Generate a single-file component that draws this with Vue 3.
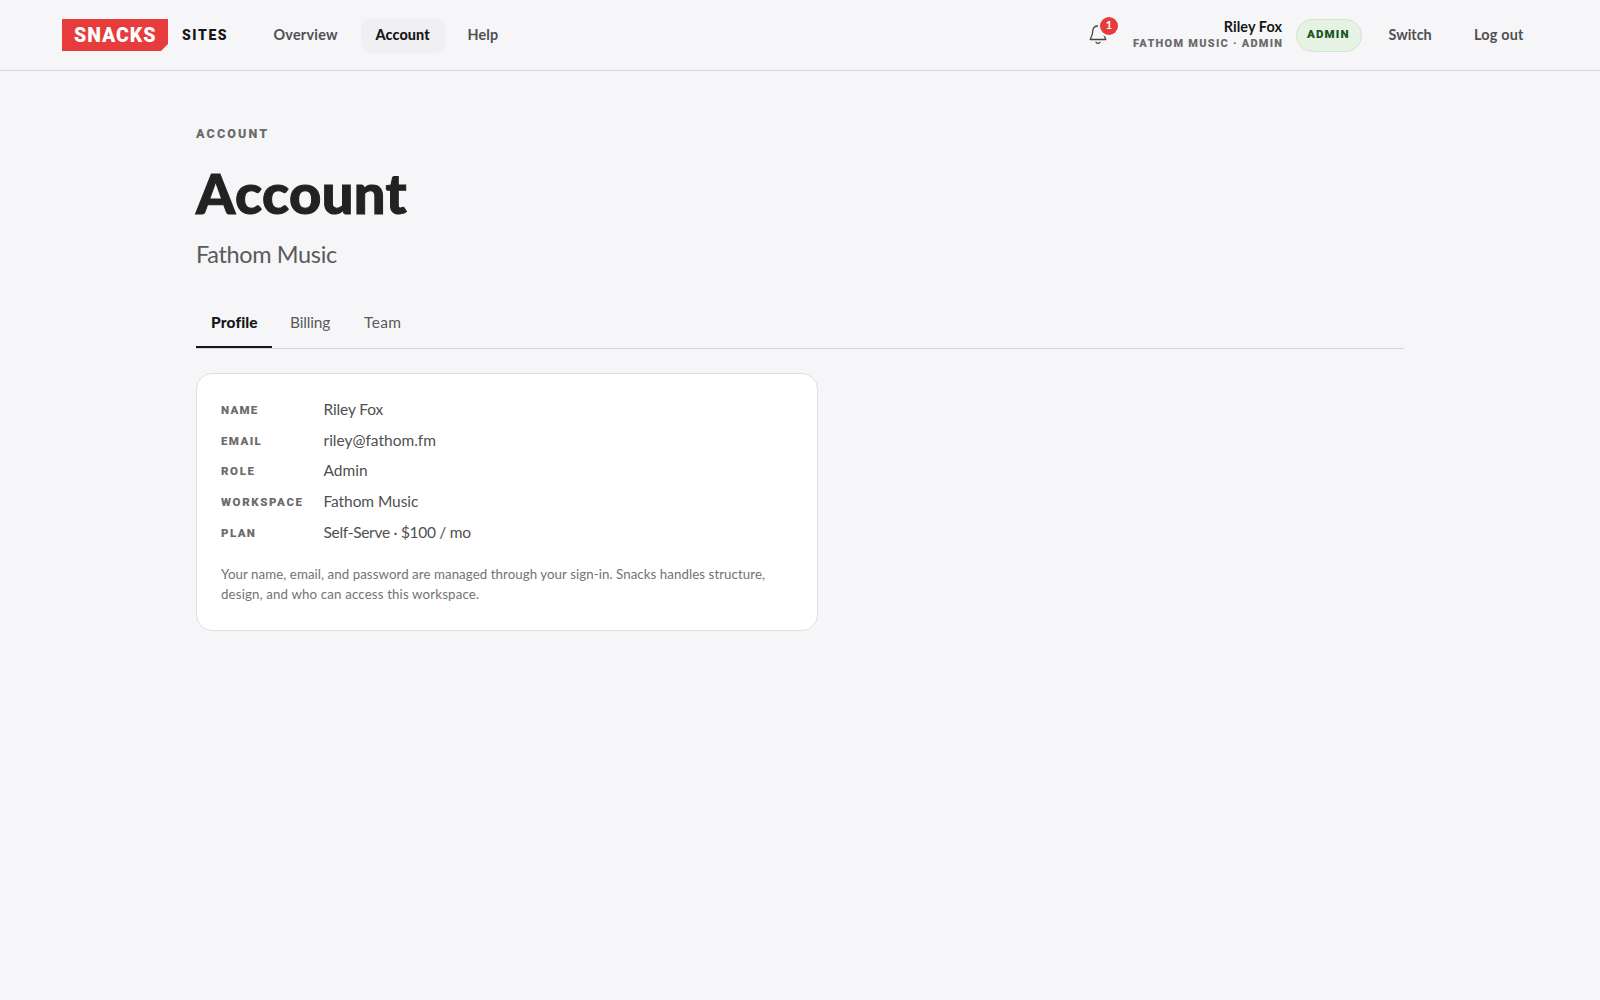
<script setup>
const rows = [
  { key: 'name', label: 'NAME', value: 'Riley Fox' },
  { key: 'email', label: 'EMAIL', value: 'riley@fathom.fm' },
  { key: 'role', label: 'ROLE', value: 'Admin' },
  { key: 'workspace', label: 'WORKSPACE', value: 'Fathom Music' },
  { key: 'plan', label: 'PLAN', value: 'Self-Serve · $100 / mo' },
]
</script>

<template>
  <div class="page">
    <header class="topbar">
      <a class="logo">SNACKS</a>
      <span class="product">SITES</span>
      <nav class="nav">
        <a class="nav-item overview">Overview</a>
        <a class="nav-item active">Account</a>
        <a class="nav-item help">Help</a>
      </nav>
      <div class="right">
        <button class="bell" aria-label="Notifications">
          <svg width="18" height="20" viewBox="0 0 18 20" fill="none" stroke="#444" stroke-width="1.3" stroke-linecap="round" stroke-linejoin="round">
            <path d="M9 1C6 1 3.900 3 3.800 6C3.600 10 3 11.300 1.200 14.500H16.800C15 11.300 14.400 10 14.200 6C14.100 3 12 1 9 1Z" />
            <path d="M7 17.300C7.600 18.600 10.400 18.600 11 17.300" />
          </svg>
          <span class="badge">1</span>
        </button>
        <div class="user">
          <span class="user-name">Riley Fox</span>
          <span class="user-org">FATHOM MUSIC · ADMIN</span>
        </div>
        <span class="pill">ADMIN</span>
        <a class="action switch">Switch</a>
        <a class="action logout">Log out</a>
      </div>
    </header>

    <main class="content">
      <div class="eyebrow">ACCOUNT</div>
      <h1>Account</h1>
      <p class="subtitle">Fathom Music</p>
      <div class="tabs">
        <a class="tab selected">Profile</a>
        <a class="tab billing">Billing</a>
        <a class="tab team">Team</a>
      </div>
      <section class="card">
        <dl>
          <div v-for="row in rows" :key="row.key" class="row" :class="row.key">
            <dt>{{ row.label }}</dt>
            <dd>{{ row.value }}</dd>
          </div>
        </dl>
        <p class="note">
          <span class="first">Your name, email, and password are managed through your sign-in. Snacks handles structure,</span><br>
          <span class="second">design, and who can access this workspace.</span>
        </p>
      </section>
    </main>
  </div>
</template>

<style>
body { background: #f6f6f9; }
</style>

<style scoped>
* { box-sizing: border-box; }
.page {
  min-height: 1000px;
  background: #f6f6f9;
  color: #505050;
  font-family: Lato, "Liberation Sans", sans-serif;
}
.topbar {
  display: flex;
  align-items: center;
  height: 71px;
  padding: 0 62px;
  border-bottom: 1px solid #d8d8dc;
}
.logo, .product, .user-org, .pill, .eyebrow, dt {
  font-family: Roboto, "Liberation Sans", sans-serif;
  font-weight: 900;
  white-space: nowrap;
}
.logo {
  width: 106px;
  height: 32px;
  padding-left: 12px;
  background: #e63c3c;
  color: #fff;
  font-size: 19.5px;
  line-height: 33px;
  letter-spacing: 0.95px;
  clip-path: polygon(0 0, 100% 0, 100% 25px, calc(100% - 7px) 100%, 0 100%);
}
.product {
  width: 60px;
  margin-left: 14px;
  padding-bottom: 1px;
  color: #171717;
  font-size: 14px;
  line-height: 20px;
  letter-spacing: 1.6px;
}
.nav { display: flex; gap: 8px; margin-left: 16.5px; }
.nav-item {
  height: 35px;
  padding: 0 15px;
  border-radius: 10px;
  font-size: 14.4px;
  font-weight: 700;
  line-height: 33px;
}
.overview { width: 94px; letter-spacing: 0.23px; }
.active { width: 84px; background: #f0f0f2; color: #171717; font-weight: 900; letter-spacing: 0.1px; }
.help { letter-spacing: 0.1px; }
.right { display: flex; align-items: center; margin-left: auto; margin-right: 1px; }
.bell {
  position: relative;
  display: flex;
  width: 18px;
  height: 20px;
  margin: 0 26px 0 0;
  padding: 0;
  border: 0;
  background: none;
}
.badge {
  position: absolute;
  left: 11px;
  top: -8px;
  width: 18px;
  height: 18px;
  border-radius: 50%;
  background: #e63c3c;
  box-shadow: 0 0 0 2px #f6f6f9;
  color: #fff;
  font: 700 11px/16px Lato, sans-serif;
  text-align: center;
}
.user { display: flex; flex-direction: column; align-items: flex-end; width: 149px; margin-right: 13.5px; }
.user-name { color: #171717; font-size: 14.4px; font-weight: 700; line-height: 17px; letter-spacing: 0.08px; }
.user-org { padding-top: 1px; color: #6b6b6b; font-size: 11px; line-height: 16px; letter-spacing: 1.25px; margin-right: -1.25px; }
.pill {
  width: 66px;
  height: 33px;
  margin-right: 12px;
  padding-left: 10.5px;
  border: 1px solid #cfe5cf;
  border-radius: 17px;
  background: #e5f2e4;
  color: #17561b;
  font-size: 11.5px;
  line-height: 29px;
  letter-spacing: 1.15px;
}
.action { height: 35px; padding: 0 15px; font-size: 14.4px; font-weight: 700; line-height: 33px; white-space: nowrap; }
.switch { width: 72px; margin-right: 13.5px; }
.logout { width: 78px; letter-spacing: 0.2px; }

.content { width: 1208px; margin: 0 auto; padding-top: 53px; }
.eyebrow { color: #6b6b6b; font-size: 12.5px; line-height: 20px; letter-spacing: 2.15px; }
h1 {
  margin: 17px 0 0;
  color: #222;
  font-size: 56px;
  font-weight: 900;
  line-height: 63px;
  letter-spacing: 0.4px;
  -webkit-text-stroke: 1px #222;
}
.subtitle { margin: 14px 0 0; font-size: 23.5px; line-height: 32px; letter-spacing: -0.36px; color: #5a5a5a; }
.tabs { display: flex; height: 50px; margin-top: 29px; border-bottom: 1px solid #d8d8dc; }
.tab { height: 49px; padding: 0 16px; font-size: 15.5px; line-height: 46px; color: #5a5a5a; }
.selected { width: 76px; padding-left: 15px; border-bottom: 2px solid #171717; color: #171717; font-weight: 900; letter-spacing: 0.13px; }
.billing { width: 76px; padding-left: 18px; letter-spacing: -0.15px; }
.team { letter-spacing: 0.4px; }
.card {
  width: 622px;
  height: 258px;
  margin-top: 24px;
  padding: 20px 24px;
  border: 1px solid #e0e0e4;
  border-radius: 16px;
  background: #fff;
}
dl { margin: 0; }
.row { display: flex; align-items: center; height: 30.7px; }
dt { width: 102.5px; padding-top: 1px; color: #6b6b6b; font-size: 11.5px; letter-spacing: 1.6px; }
dd { margin: 0; padding-bottom: 1px; font-size: 15.5px; letter-spacing: -0.08px; }
.name dt { letter-spacing: 1.2px; }
.email dt, .plan dt { letter-spacing: 1.4px; }
.name dd { letter-spacing: -0.12px; }
.email dd, .role dd { letter-spacing: 0; }
.plan dd { letter-spacing: -0.3px; }
.note { margin: 16.5px 0 0; color: #737373; font-size: 13.3px; line-height: 20px; white-space: nowrap; }
.first { letter-spacing: 0.06px; }
.second { letter-spacing: 0.14px; }
</style>
